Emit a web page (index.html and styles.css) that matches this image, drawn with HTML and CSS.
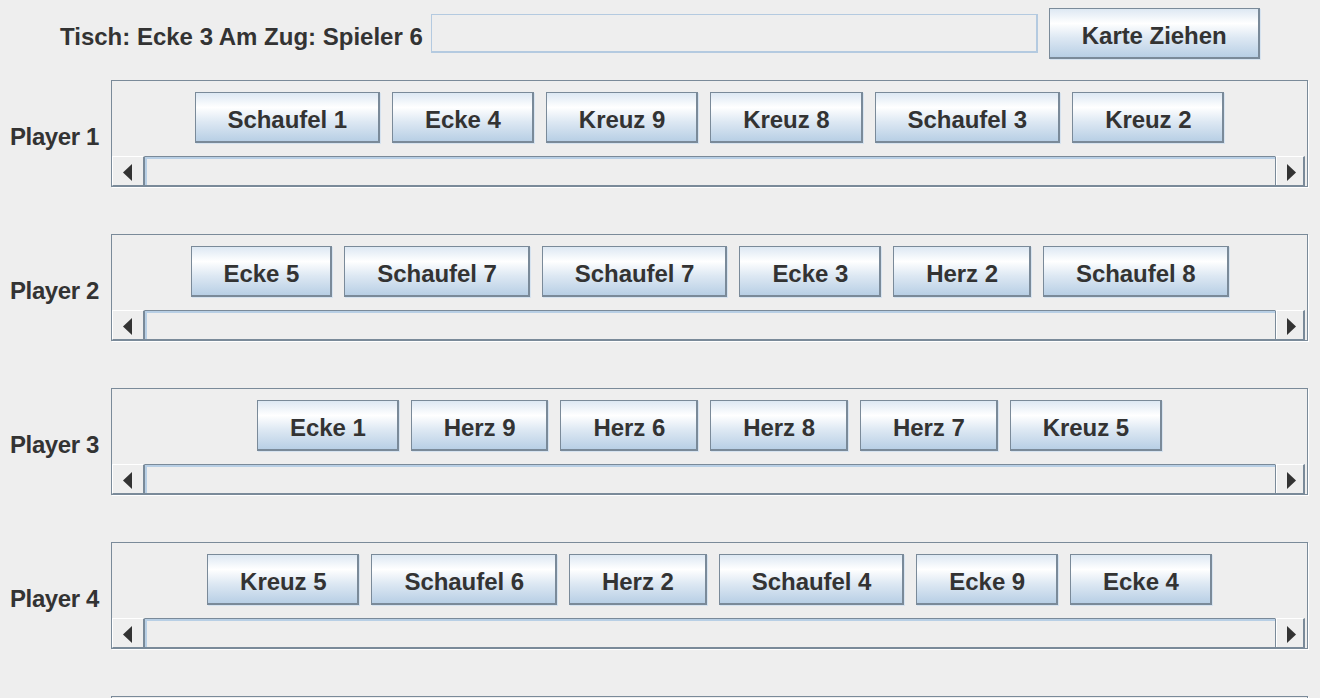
FILE: index.html
```html
<!DOCTYPE html>
<html lang="de">
<head>
<meta charset="utf-8">
<title>Kartenspiel</title>
<link rel="stylesheet" href="styles.css">
</head>
<body>
<div class="topbar">
  <span class="status">Tisch: Ecke 3 Am Zug: Spieler 6</span>
  <div class="field"></div>
  <button class="btn draw">Karte Ziehen</button>
</div>

<div class="players">
  <div class="row">
    <div class="plabel">Player 1</div>
    <div class="pane">
      <div class="viewport">
        <button class="btn">Schaufel 1</button>
        <button class="btn">Ecke 4</button>
        <button class="btn">Kreuz 9</button>
        <button class="btn">Kreuz 8</button>
        <button class="btn">Schaufel 3</button>
        <button class="btn">Kreuz 2</button>
      </div>
      <div class="hbar">
        <div class="arrow left"><svg width="9" height="17" viewBox="0 0 9 17"><polygon points="9,0 9,17 0,8.5"/></svg></div>
        <div class="track"></div>
        <div class="arrow right"><svg width="9" height="17" viewBox="0 0 9 17"><polygon points="0,0 0,17 9,8.5"/></svg></div>
      </div>
    </div>
  </div>

  <div class="row">
    <div class="plabel">Player 2</div>
    <div class="pane">
      <div class="viewport">
        <button class="btn">Ecke 5</button>
        <button class="btn">Schaufel 7</button>
        <button class="btn">Schaufel 7</button>
        <button class="btn">Ecke 3</button>
        <button class="btn">Herz 2</button>
        <button class="btn">Schaufel 8</button>
      </div>
      <div class="hbar">
        <div class="arrow left"><svg width="9" height="17" viewBox="0 0 9 17"><polygon points="9,0 9,17 0,8.5"/></svg></div>
        <div class="track"></div>
        <div class="arrow right"><svg width="9" height="17" viewBox="0 0 9 17"><polygon points="0,0 0,17 9,8.5"/></svg></div>
      </div>
    </div>
  </div>

  <div class="row">
    <div class="plabel">Player 3</div>
    <div class="pane">
      <div class="viewport">
        <button class="btn">Ecke 1</button>
        <button class="btn">Herz 9</button>
        <button class="btn">Herz 6</button>
        <button class="btn">Herz 8</button>
        <button class="btn">Herz 7</button>
        <button class="btn">Kreuz 5</button>
      </div>
      <div class="hbar">
        <div class="arrow left"><svg width="9" height="17" viewBox="0 0 9 17"><polygon points="9,0 9,17 0,8.5"/></svg></div>
        <div class="track"></div>
        <div class="arrow right"><svg width="9" height="17" viewBox="0 0 9 17"><polygon points="0,0 0,17 9,8.5"/></svg></div>
      </div>
    </div>
  </div>

  <div class="row">
    <div class="plabel">Player 4</div>
    <div class="pane">
      <div class="viewport">
        <button class="btn">Kreuz 5</button>
        <button class="btn">Schaufel 6</button>
        <button class="btn">Herz 2</button>
        <button class="btn">Schaufel 4</button>
        <button class="btn">Ecke 9</button>
        <button class="btn">Ecke 4</button>
      </div>
      <div class="hbar">
        <div class="arrow left"><svg width="9" height="17" viewBox="0 0 9 17"><polygon points="9,0 9,17 0,8.5"/></svg></div>
        <div class="track"></div>
        <div class="arrow right"><svg width="9" height="17" viewBox="0 0 9 17"><polygon points="0,0 0,17 9,8.5"/></svg></div>
      </div>
    </div>
  </div>

  <div class="row">
    <div class="plabel"></div>
    <div class="pane">
      <div class="viewport"></div>
      <div class="hbar">
        <div class="arrow left"><svg width="9" height="17" viewBox="0 0 9 17"><polygon points="9,0 9,17 0,8.5"/></svg></div>
        <div class="track"></div>
        <div class="arrow right"><svg width="9" height="17" viewBox="0 0 9 17"><polygon points="0,0 0,17 9,8.5"/></svg></div>
      </div>
    </div>
  </div>
</div>
</body>
</html>
```

FILE: styles.css
```css
html, body {
  margin: 0;
  padding: 0;
  background: #eeeeee;
  overflow: hidden;
}

body {
  width: 1320px;
  height: 698px;
  font-family: "Liberation Sans", Arial, sans-serif;
  font-weight: bold;
  font-size: 24px;
  color: #333333;
}

.topbar {
  display: flex;
  justify-content: flex-start;
  align-items: center;
  padding-top: 8px;
  padding-left: 60px;
  height: 51px;
}

.status {
  padding-top: 6px;
  margin-right: 8px;
  white-space: nowrap;
}

.field {
  box-sizing: border-box;
  width: 607px;
  height: 39px;
  border-style: solid;
  border-color: #b4cae0;
  border-width: 1px 2px 2px 1px;
  background: #eeeeee;
  margin-right: 11px;
}

.btn {
  box-sizing: border-box;
  height: 51px;
  margin: 0;
  padding: 5px 31px 0 32px;
  display: flex;
  align-items: center;
  justify-content: center;
  font: inherit;
  letter-spacing: -0.05px;
  color: #333333;
  white-space: nowrap;
  border-style: solid;
  border-color: #7a8a99;
  border-width: 1px 2px 2px 1px;
  border-radius: 0;
  background: linear-gradient(#dde8f3 0%, #ffffff 30%, #dde8f3 60%, #b8cfe5 100%);
  box-shadow: 1px 1px 0 #d6e3f0;
  flex: none;
}

.players {
  margin-top: 21px;
  display: flex;
  flex-direction: column;
  gap: 47px;
}

.row {
  display: grid;
  grid-template-columns: 111px 1197px;
  align-items: center;
}

.plabel {
  padding-left: 10px;
  padding-top: 6px;
  white-space: nowrap;
  letter-spacing: -0.4px;
}

.pane {
  box-sizing: border-box;
  width: 1197px;
  height: 107px;
  border: 1px solid #7a8a99;
  box-shadow: 1px 1px 0 #ffffff;
  display: flex;
  flex-direction: column;
}

.viewport {
  height: 75px;
  box-sizing: border-box;
  padding-top: 11px;
  display: flex;
  justify-content: center;
  align-items: flex-start;
  gap: 12px;
}

.hbar {
  height: 30px;
  display: flex;
  padding-right: 2px;
}

.arrow {
  box-sizing: border-box;
  height: 30px;
  display: flex;
  align-items: center;
  justify-content: center;
  padding-top: 2px;
  background: #eeeeee;
  border-style: solid;
}

.arrow svg {
  display: block;
  fill: #333333;
}

.arrow.left {
  width: 33px;
  border-width: 1px 2px 1px 1px;
  border-color: #ffffff #7a8a99 #7a8a99 #ffffff;
  padding-right: 1px;
}

.arrow.right {
  width: 30px;
  border-width: 1px 2px 1px 1px;
  border-color: #ffffff #7a8a99 #7a8a99 #7a8a99;
  box-shadow: inset 1px 0 0 #ffffff;
  padding-left: 3px;
}

.track {
  flex: 1;
  box-sizing: border-box;
  height: 30px;
  background: #eeeeee;
  border-top: 1px solid #7a8a99;
  border-bottom: 1px solid #7a8a99;
  box-shadow: inset 2px 2px 0 #b8cfe5;
}
```
